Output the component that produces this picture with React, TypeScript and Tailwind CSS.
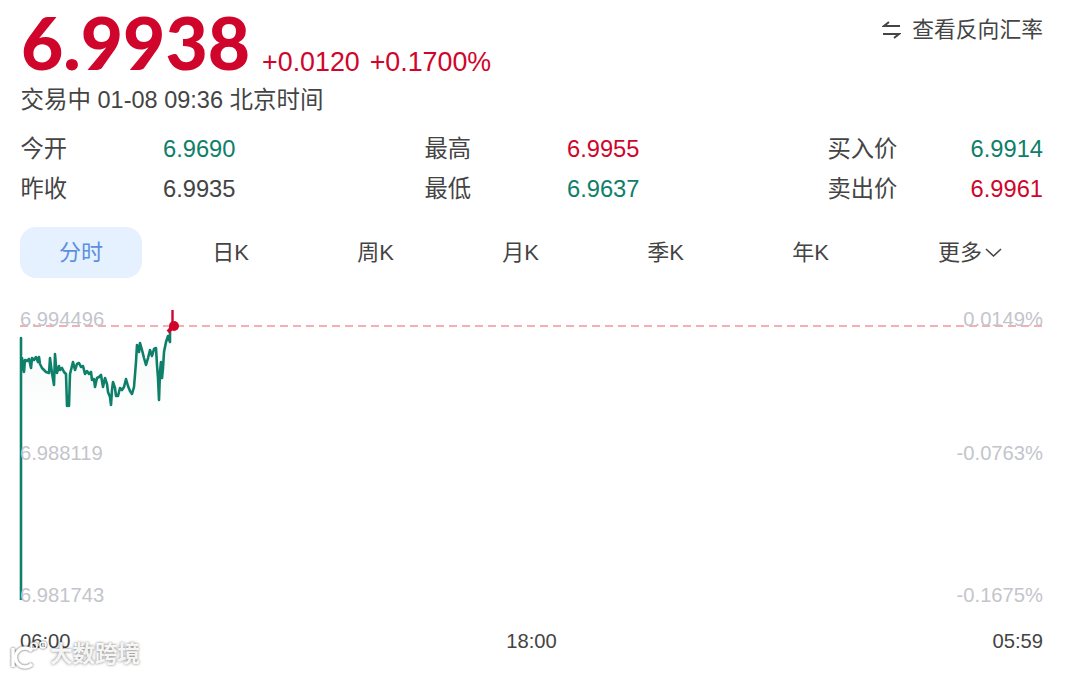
const fontStack = { fontFamily: '"Liberation Sans", "Noto Sans CJK SC", sans-serif' };

const stats = [
  [
    { label: "今开", value: "6.9690", color: "text-[#0e8069]" },
    { label: "昨收", value: "6.9935", color: "text-[#444444]" },
  ],
  [
    { label: "最高", value: "6.9955", color: "text-[#d0052c]" },
    { label: "最低", value: "6.9637", color: "text-[#0e8069]" },
  ],
];

const quotes = [
  { label: "买入价", value: "6.9914", color: "text-[#0e8069]" },
  { label: "卖出价", value: "6.9961", color: "text-[#d0052c]" },
];

const tabs = ["日K", "周K", "月K", "季K", "年K"];

const greenLine =
  "21,338 21,372 22,358 24,372 25,360 27,361 29,359 31,368 32,358 34,360 36,357 38,362 39,357 40,364 42,368 44,370 46,372 49,373 50,358 51,366 52,373 54,385 55,354 56,366 57,373 59,366 60,370 62,368 64,372 66,374 67,406 68,400 69,406 70,374 72,366 73,362 75,370 77,364 79,363 81,367 83,366 85,374 87,371 89,374 91,372 92,380 94,379 95,387 97,378 99,377 101,375 103,387 105,378 107,384 108,392 110,397 111,405 112,390 113,382 115,388 116,396 118,396 120,388 122,390 124,387 126,379 128,386 130,391 132,394 134,387 136,362 137,345 139,352 140,343 142,350 144,358 146,365 148,358 150,350 152,356 154,349 156,348 157,365 158,378 159,400 160,372 161,362 162,378 163,368 164,352 166,342 168,336 170,342 170,332";

function Chart() {
  return (
    <svg className="absolute left-0 top-0" width="1080" height="375" viewBox="0 300 1080 375">
      <defs>
        <linearGradient id="fade" gradientUnits="userSpaceOnUse" x1="0" y1="340" x2="0" y2="425">
          <stop offset="0" stopColor="#0e8069" stopOpacity="0.04" />
          <stop offset="1" stopColor="#0e8069" stopOpacity="0" />
        </linearGradient>
      </defs>
      <polygon points={`${greenLine} 170,425 21,425`} fill="url(#fade)" />
      <line x1="20" y1="326" x2="1043" y2="326" stroke="#f4aeb4" strokeWidth="2" strokeDasharray="8 5" />
      <polyline points={`21,600 ${greenLine}`} fill="none" stroke="#0e8069" strokeWidth="2.6" strokeLinejoin="round" />
      <polyline points="168,332 170,330 172,326" fill="none" stroke="#d0052c" strokeWidth="4" />
      <line x1="172.5" y1="326" x2="172.5" y2="310" stroke="#d0052c" strokeWidth="2.4" />
      <circle cx="174" cy="326" r="5" fill="#d0052c" />
    </svg>
  );
}

function Watermark() {
  return (
    <div className="absolute left-[9px] top-[340px] flex items-center gap-0 text-[22.5px] leading-[30px] font-bold text-white/90 [text-shadow:0_0_3px_rgba(0,0,0,0.55)]">
      <svg width="41" height="30" viewBox="0 0 41 30" fill="none" stroke="#ffffff" strokeWidth="3.5" className="drop-shadow-[0_0_1px_rgba(0,0,0,0.7)]">
        <path d="M4 8v19" />
        <path d="M23 11a9.5 9.5 0 1 0 0 13" />
        <circle cx="25" cy="6" r="3" strokeWidth="1.5" />
        <circle cx="34" cy="5" r="3" strokeWidth="1.5" />
      </svg>
      <span>大数跨境</span>
    </div>
  );
}

export default function App() {
  return (
    <div className="w-[1080px] h-[675px] bg-white overflow-hidden flex flex-col" style={fontStack}>
      <div className="flex justify-between pl-[21px] pr-[37px] h-[80px]">
        <div className="flex items-end">
          <span className="text-[73px] leading-[76px] font-black font-['Lato'] text-[#d0052c]">6.9938</span>
          <span className="ml-[12px] mb-[2px] text-[26.8px] leading-[32px] text-[#d0052c]">+0.0120</span>
          <span className="ml-[10px] mb-[2px] text-[26.8px] leading-[32px] text-[#d0052c]">+0.1700%</span>
        </div>
        <div className="flex items-center h-[30px] mt-[15px] text-[#444444] text-[21.8px]">
          <svg width="19" height="18" viewBox="0 0 19 18" fill="none" stroke="#444444" strokeWidth="2" className="mr-[11px]">
            <path d="M18 5H2l5-4" />
            <path d="M1 13h16l-5 4" />
          </svg>
          查看反向汇率
        </div>
      </div>

      <div className="pl-[20.5px] mt-[5px] text-[23.5px] leading-[30px] text-[#444444]">交易中 01-08 09:36 北京时间</div>

      <div className="flex pl-[20.5px] pr-[37px] mt-[14px] text-[23.3px] leading-[40px]">
        {stats.map((col, i) => (
          <div key={i} className="w-[404px]">
            {col.map((row) => (
              <div key={row.label} className="flex">
                <span className="w-[142.5px] text-[#444444]">{row.label}</span>
                <span className={`text-[23.7px] ${row.color}`}>{row.value}</span>
              </div>
            ))}
          </div>
        ))}
        <div className="flex-1 -ml-[1px]">
          {quotes.map((row) => (
            <div key={row.label} className="flex justify-between">
              <span className="text-[#444444]">{row.label}</span>
              <span className={`text-[23.7px] ${row.color}`}>{row.value}</span>
            </div>
          ))}
        </div>
      </div>

      <div className="flex items-center h-[51px] mt-[18px] pl-[20px] text-[22px] text-[#444444]">
        <div className="w-[122px] h-full rounded-[16px] bg-[#e6f1ff] text-[#5b8fe0] flex items-center justify-center mr-[16px]">分时</div>
        {tabs.map((t) => (
          <div key={t} className="w-[145px] text-center">{t}</div>
        ))}
        <div className="flex items-center pl-[55px]">
          更多
          <svg width="17" height="10" viewBox="0 0 17 10" fill="none" stroke="#444444" strokeWidth="1.6" className="ml-[3px]">
            <path d="M1 1l7.5 7 7.5-7" />
          </svg>
        </div>
      </div>

      <div className="relative flex-1 mt-[22px]">
        <Chart />
        <div className="relative flex flex-col text-[20.2px] leading-[24px] pl-[20px] pr-[37px] pt-[7px] text-[#c3c5cb]">
          <div className="flex justify-between"><span>6.994496</span><span>0.0149%</span></div>
          <div className="flex justify-between mt-[110px]"><span>6.988119</span><span>-0.0763%</span></div>
          <div className="flex justify-between mt-[118px]"><span>6.981743</span><span>-0.1675%</span></div>
          <div className="flex justify-between mt-[22px] text-[#444444]"><span>06:00</span><span>18:00</span><span>05:59</span></div>
        </div>
        <Watermark />
      </div>
    </div>
  );
}
